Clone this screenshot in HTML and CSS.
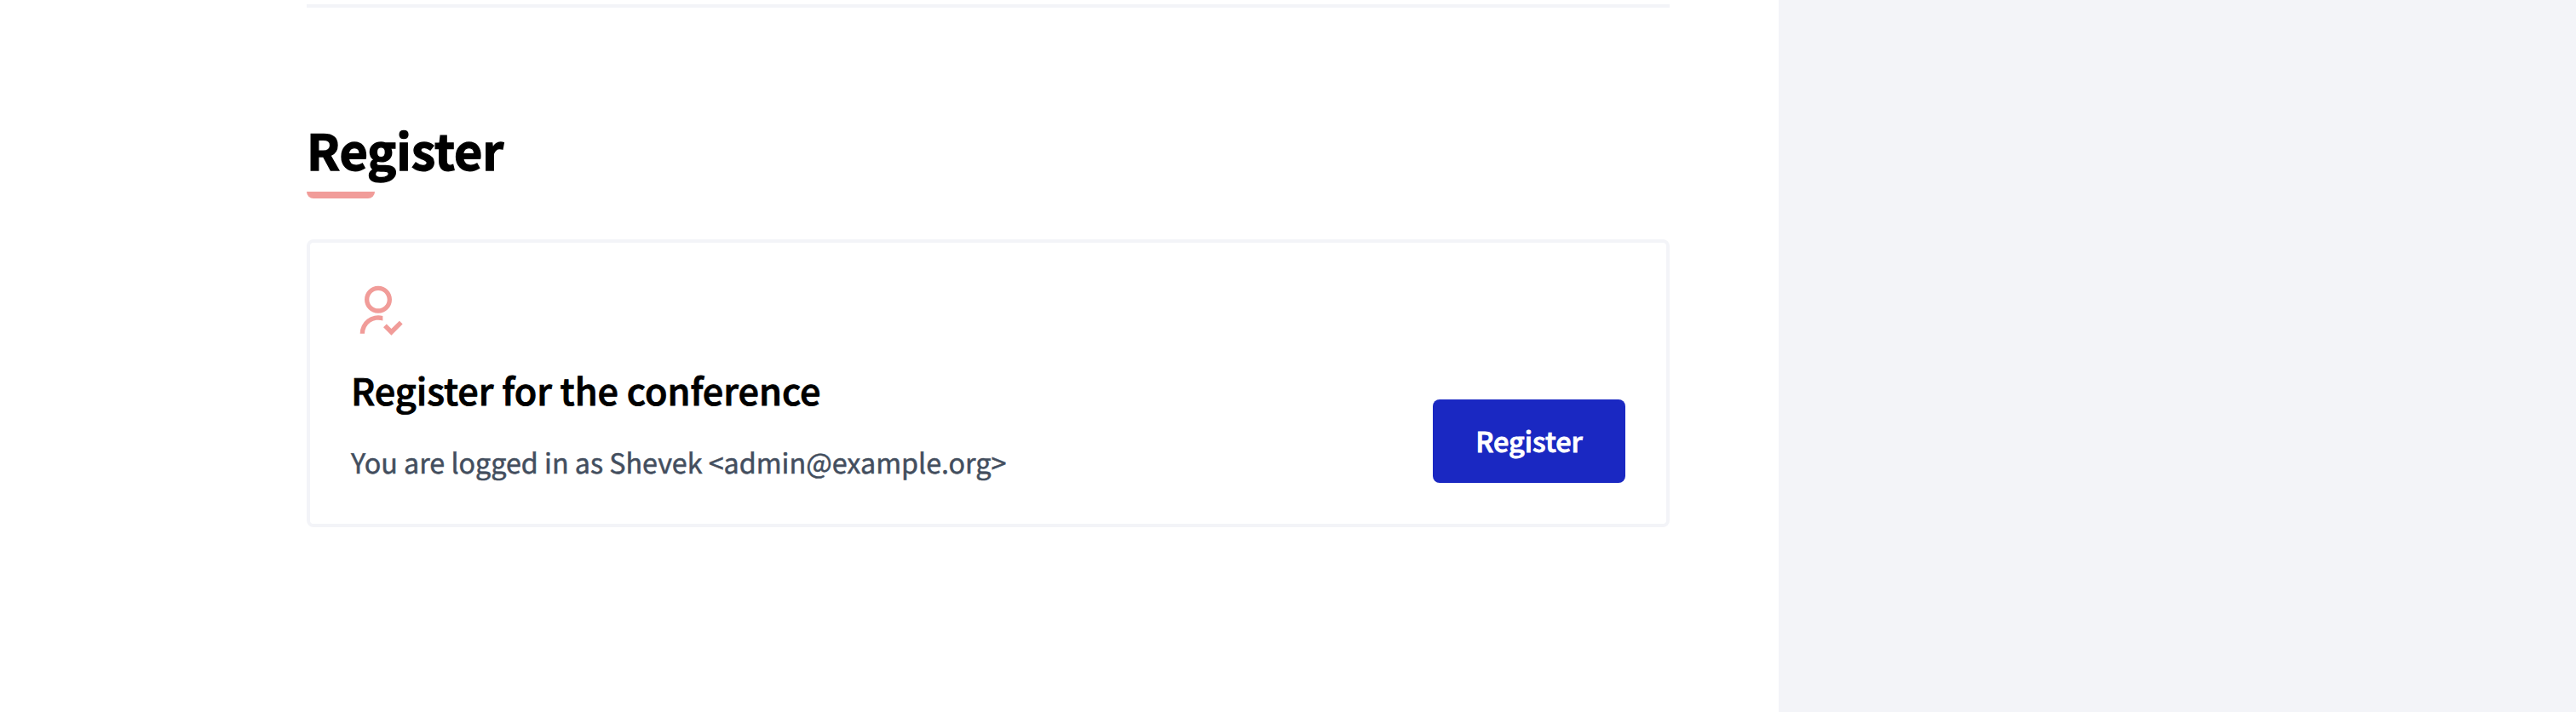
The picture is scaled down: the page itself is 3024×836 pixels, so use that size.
FILE: index.html
```html
<!DOCTYPE html>
<html lang="en">
<head>
<meta charset="utf-8">
<title>Register</title>
<link rel="stylesheet" href="styles.css">
</head>
<body>
<div class="layout">
  <main class="content">
    <hr class="divider">
    <h2 class="section-title">Register</h2>
    <section class="card">
      <div class="card-body">
        <svg class="card-icon" viewBox="0 0 24 24" aria-hidden="true"><path fill="currentColor" d="M14 14.252v2.09A6 6 0 0 0 6 22l-2-.001a8 8 0 0 1 10-7.748zM12 13c-3.315 0-6-2.685-6-6s2.685-6 6-6 6 2.685 6 6-2.685 6-6 6zm0-2c2.21 0 4-1.79 4-4s-1.79-4-4-4-4 1.79-4 4 1.79 4 4 4zm5.793 8.914l3.535-3.535 1.415 1.414-4.95 4.95-3.536-3.536 1.415-1.414 2.12 2.121z"/></svg>
        <h3 class="card-title">Register for the conference</h3>
        <p class="card-note">You are logged in as Shevek &lt;admin@example.org&gt;</p>
      </div>
      <button class="button" type="button">Register</button>
    </section>
  </main>
  <aside class="sidebar"></aside>
</div>
</body>
</html>
```
FILE: styles.css
```css
* { box-sizing: border-box; }
body {
  margin: 0;
  background: #fff;
  color: #000;
  font-family: "Source Sans Pro", "Noto Sans CJK SC", sans-serif;
  text-rendering: geometricPrecision;
}
.layout {
  display: grid;
  grid-template-columns: 2088px 1fr;
  height: 836px;
  overflow: hidden;
}
.content { padding: 5px 128px 0 360px; }
.sidebar { background: #f3f4f8; }
.divider {
  height: 4px;
  margin: 0 0 128px;
  border: 0;
  background: #f3f4f8;
}
.section-title {
  margin: 0 0 48px;
  font-size: 57.4px;
  line-height: 76px;
  font-weight: 700;
  -webkit-text-stroke: 1.4px currentColor;
}
.section-title::after {
  content: "";
  display: block;
  width: 80px;
  height: 8px;
  margin-top: 12px;
  border-radius: 0 0 8px 8px;
  background: #f19c99;
}
.card {
  display: flex;
  justify-content: space-between;
  align-items: flex-end;
  height: 338px;
  padding: 48px;
  border: 4px solid #f3f4f8;
  border-radius: 8px;
}
.card-icon { display: block; width: 64px; height: 64px; color: #f19c99; }
.card-title {
  margin: 31px 0 32px;
  font-size: 43.2px;
  line-height: 60px;
  font-weight: 500;
  -webkit-text-stroke: 0.9px currentColor;
}
.card-note {
  margin: 0;
  color: #434e5e;
  font-size: 32.25px;
  line-height: 47px;
  font-weight: 400;
  -webkit-text-stroke: 0.5px currentColor;
}
.button {
  width: 226px;
  height: 98px;
  padding: 0 0 2px;
  border: 0;
  border-radius: 8px;
  background: #1a28c2;
  color: #fff;
  font: 500 32.4px/54px "Source Sans Pro", "Noto Sans CJK SC", sans-serif;
  -webkit-text-stroke: 0.9px currentColor;
}
```
